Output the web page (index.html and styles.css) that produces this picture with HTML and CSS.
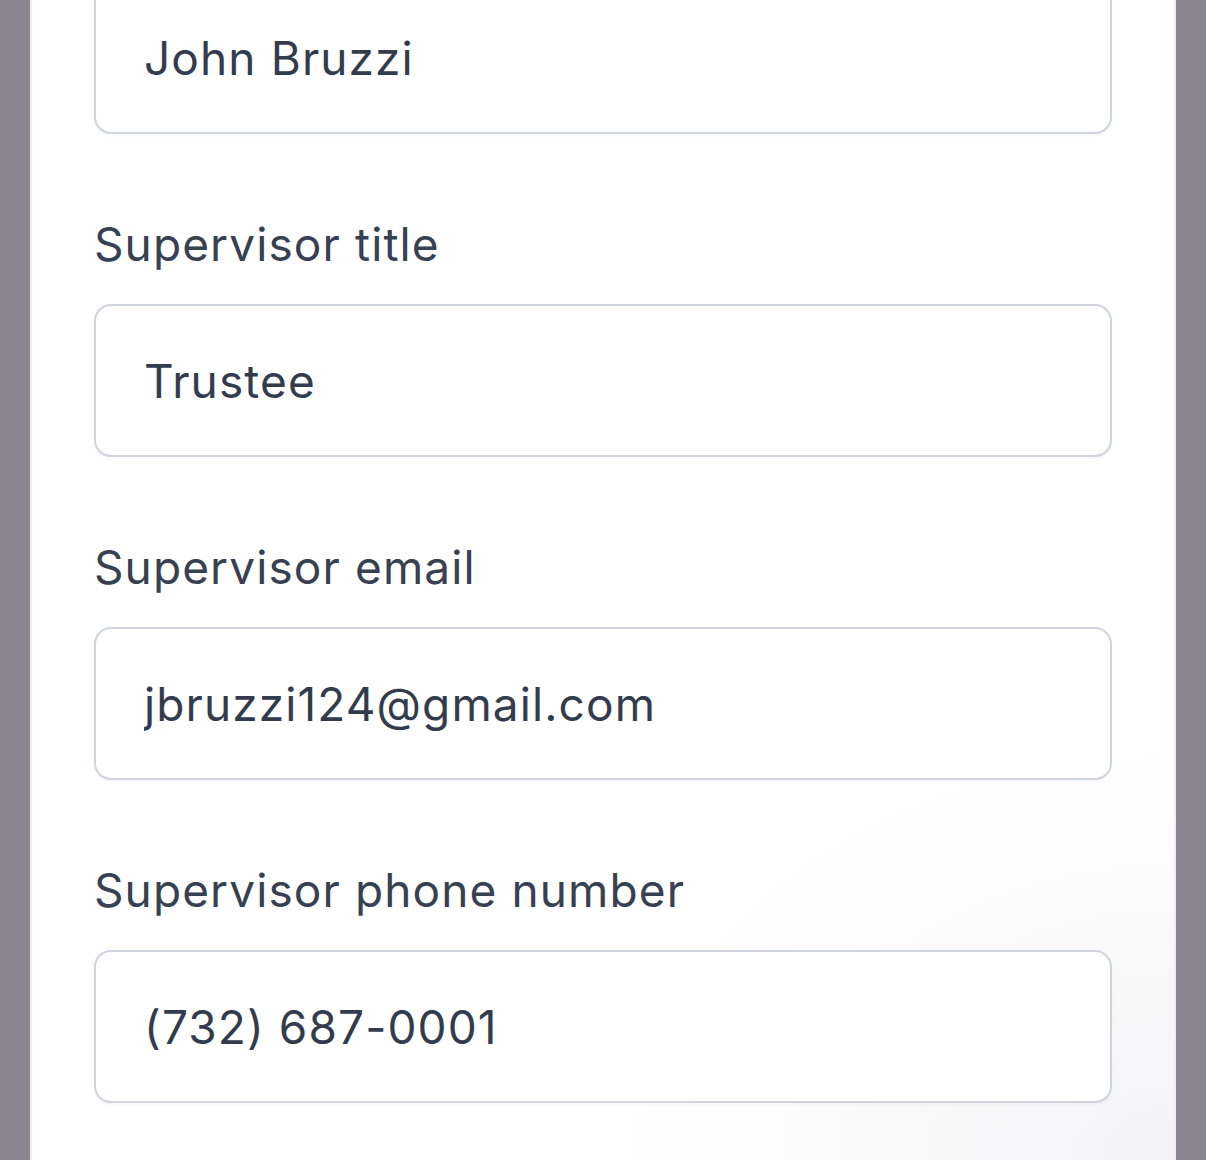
FILE: index.html
```html
<!DOCTYPE html>
<html lang="en">
<head>
  <meta charset="UTF-8" />
  <meta name="viewport" content="width=device-width, initial-scale=1.0" />
  <title>Supervisor details</title>
  <link rel="stylesheet" href="styles.css">
</head>
<body>
  <div class="sheet">
    <form class="form">
      <div class="field">
        <input type="text" id="supName" aria-label="Supervisor name" value="John Bruzzi">
      </div>
      <div class="field">
        <label for="supTitle">Supervisor title</label>
        <input type="text" id="supTitle" value="Trustee">
      </div>
      <div class="field">
        <label for="supEmail">Supervisor email</label>
        <input type="email" id="supEmail" value="jbruzzi124@gmail.com">
      </div>
      <div class="field">
        <label for="supPhone">Supervisor phone number</label>
        <input type="tel" id="supPhone" value="(732) 687-0001">
      </div>
    </form>
  </div>
</body>
</html>
```

FILE: styles.css
```css
/* Base */
body {
  margin: 0;
  padding: 0;
  height: 100vh;
  overflow: hidden;
  background-color: #8a8590;
  font-family: 'Inter', 'Noto Sans', sans-serif;
  color: #374151;
}

/* Sheet */
.sheet {
  margin: -19px 30px 0;
  padding: 0 62px 200px;
  min-height: 1300px;
  background: radial-gradient(ellipse 560px 420px at 100% 100%, #f3f3f5 0%, #ffffff 100%) no-repeat right 0 top 760px / 620px 420px, #ffffff;
  border-left: 2px solid #efedf2;
  border-right: 2px solid #efedf2;
}

.form {
  display: flex;
  flex-direction: column;
  gap: 82px;
}

.field label {
  display: block;
  font-size: 46px;
  line-height: 56px;
  margin-bottom: 32px;
  letter-spacing: 0.024em;
  color: #374151;
}

.field input {
  display: block;
  box-sizing: border-box;
  width: 100%;
  height: 153px;
  padding: 0 48px;
  border: 2px solid #d0d4de;
  border-radius: 17px;
  background: #ffffff;
  font-family: inherit;
  font-size: 46px;
  letter-spacing: 0.024em;
  color: #333c4d;
  outline: none;
  box-shadow: 0 2px 3px rgba(0, 0, 0, 0.03);
}
```
